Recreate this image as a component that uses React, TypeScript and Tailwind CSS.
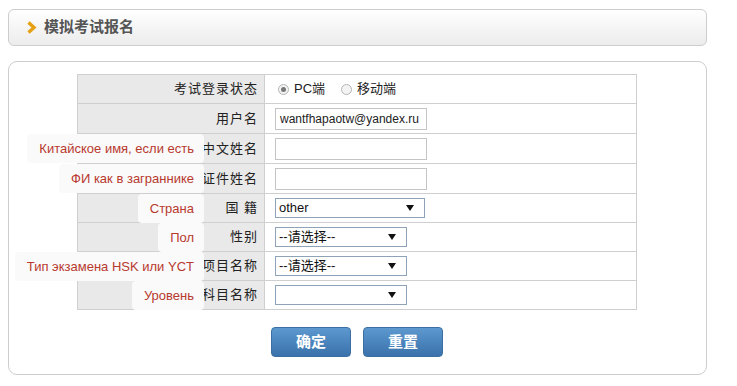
import React from 'react';

const font = { fontFamily: '"Liberation Sans", Arial, "Noto Sans CJK SC", sans-serif' };

type Row = {
  label: string;
  hint?: string;
  h: string;
  field: React.ReactNode;
};

function FakeSelect({ value, width }: { value: string; width: string }) {
  return (
    <div className={`flex h-[20px] ${width} items-center justify-between border border-[#8fa3b8] bg-white pl-[3px] pr-[10px] text-[13px] text-[#111]`}>
      <span>{value}</span>
      <svg width="8" height="6" viewBox="0 0 8 6">
        <path d="M0 0 L8 0 L4 6 Z" fill="#111" />
      </svg>
    </div>
  );
}

function Radio({ checked, label }: { checked?: boolean; label: string }) {
  return (
    <span className="flex items-center gap-[5px]">
      <span className="flex h-[11px] w-[11px] items-center justify-center rounded-full border border-[#b5b5b5] bg-[#f3f3f3]">
        {checked && <span className="h-[5px] w-[5px] rounded-full bg-[#777]" />}
      </span>
      <span className="text-[13px] text-[#222]">{label}</span>
    </span>
  );
}

const rows: Row[] = [
  {
    label: '考试登录状态',
    h: 'h-[29px]',
    field: (
      <div className="flex items-center gap-[16px] pl-[3px]">
        <Radio checked label="PC端" />
        <Radio label="移动端" />
      </div>
    ),
  },
  {
    label: '用户名',
    h: 'h-[30px]',
    field: (
      <div className="flex h-[22px] w-[152px] items-center border border-[#c4c4c4] bg-white px-[4px] text-[12px] text-[#222]">
        wantfhapaotw@yandex.ru
      </div>
    ),
  },
  {
    label: '中文姓名',
    hint: 'Китайское имя, если есть',
    h: 'h-[30px]',
    field: <div className="h-[22px] w-[152px] border border-[#c4c4c4] bg-white" />,
  },
  {
    label: '证件姓名',
    hint: 'ФИ как в загранnике'.replace('n', 'н'),
    h: 'h-[30px]',
    field: <div className="h-[22px] w-[152px] border border-[#c4c4c4] bg-white" />,
  },
  {
    label: '国 籍',
    hint: 'Страна',
    h: 'h-[29px]',
    field: <FakeSelect value="other" width="w-[150px]" />,
  },
  {
    label: '性别',
    hint: 'Пол',
    h: 'h-[29px]',
    field: <FakeSelect value="--请选择--" width="w-[132px]" />,
  },
  {
    label: '项目名称',
    hint: 'Тип экзамена HSK или YCT',
    h: 'h-[29px]',
    field: <FakeSelect value="--请选择--" width="w-[132px]" />,
  },
  {
    label: '科目名称',
    hint: 'Уровень',
    h: 'h-[29px]',
    field: <FakeSelect value="" width="w-[132px]" />,
  },
];

export default function App() {
  return (
    <div className="min-h-screen bg-white pl-[8px] pt-[9px]" style={font}>
      {/* title bar */}
      <div className="flex h-[37px] w-[699px] items-center gap-[7px] rounded-[6px] border border-[#cdcdcd] bg-gradient-to-b from-white to-[#ececec] pl-[18px]">
        <svg width="10" height="13" viewBox="0 0 10 13">
          <path d="M1.5 1.5 L7 6.5 L1.5 11.5" fill="none" stroke="#e5a113" strokeWidth="3.4" />
        </svg>
        <span className="text-[15px] font-bold text-[#555]">模拟考试报名</span>
      </div>

      {/* form panel */}
      <div className="mt-[15px] h-[314px] w-[699px] rounded-[9px] border border-[#cdcdcd] bg-white pl-[68px] pt-[12px]">
        <table className="w-[560px] border-collapse">
          <tbody>
            {rows.map((r) => (
              <tr key={r.label} className={r.h}>
                <td className="relative w-[187px] border border-[#cfcfcf] bg-[#e9e9e9] p-0 pr-[6px] text-right text-[13px] tracking-[1px] text-[#222]">
                  {r.hint && (
                    <span className="absolute right-[60px] top-0 flex h-[29px] items-center whitespace-nowrap rounded-[4px] bg-[#fafafa] pl-[12px] pr-[10px] text-[13px] tracking-normal text-[#b8392e]">
                      {r.hint}
                    </span>
                  )}
                  {r.label}
                </td>
                <td className="border border-[#cfcfcf] bg-white p-0 pl-[10px]">{r.field}</td>
              </tr>
            ))}
          </tbody>
        </table>

        <div className="mt-[17px] flex gap-[12px] pl-[194px]">
          {['确定', '重置'].map((t) => (
            <button
              key={t}
              className="flex h-[30px] w-[80px] items-center justify-center rounded-[4px] border border-[#3b6fa3] bg-gradient-to-b from-[#5d98cf] to-[#3a72ab] text-[15px] font-bold text-white"
            >
              {t}
            </button>
          ))}
        </div>
      </div>
    </div>
  );
}
